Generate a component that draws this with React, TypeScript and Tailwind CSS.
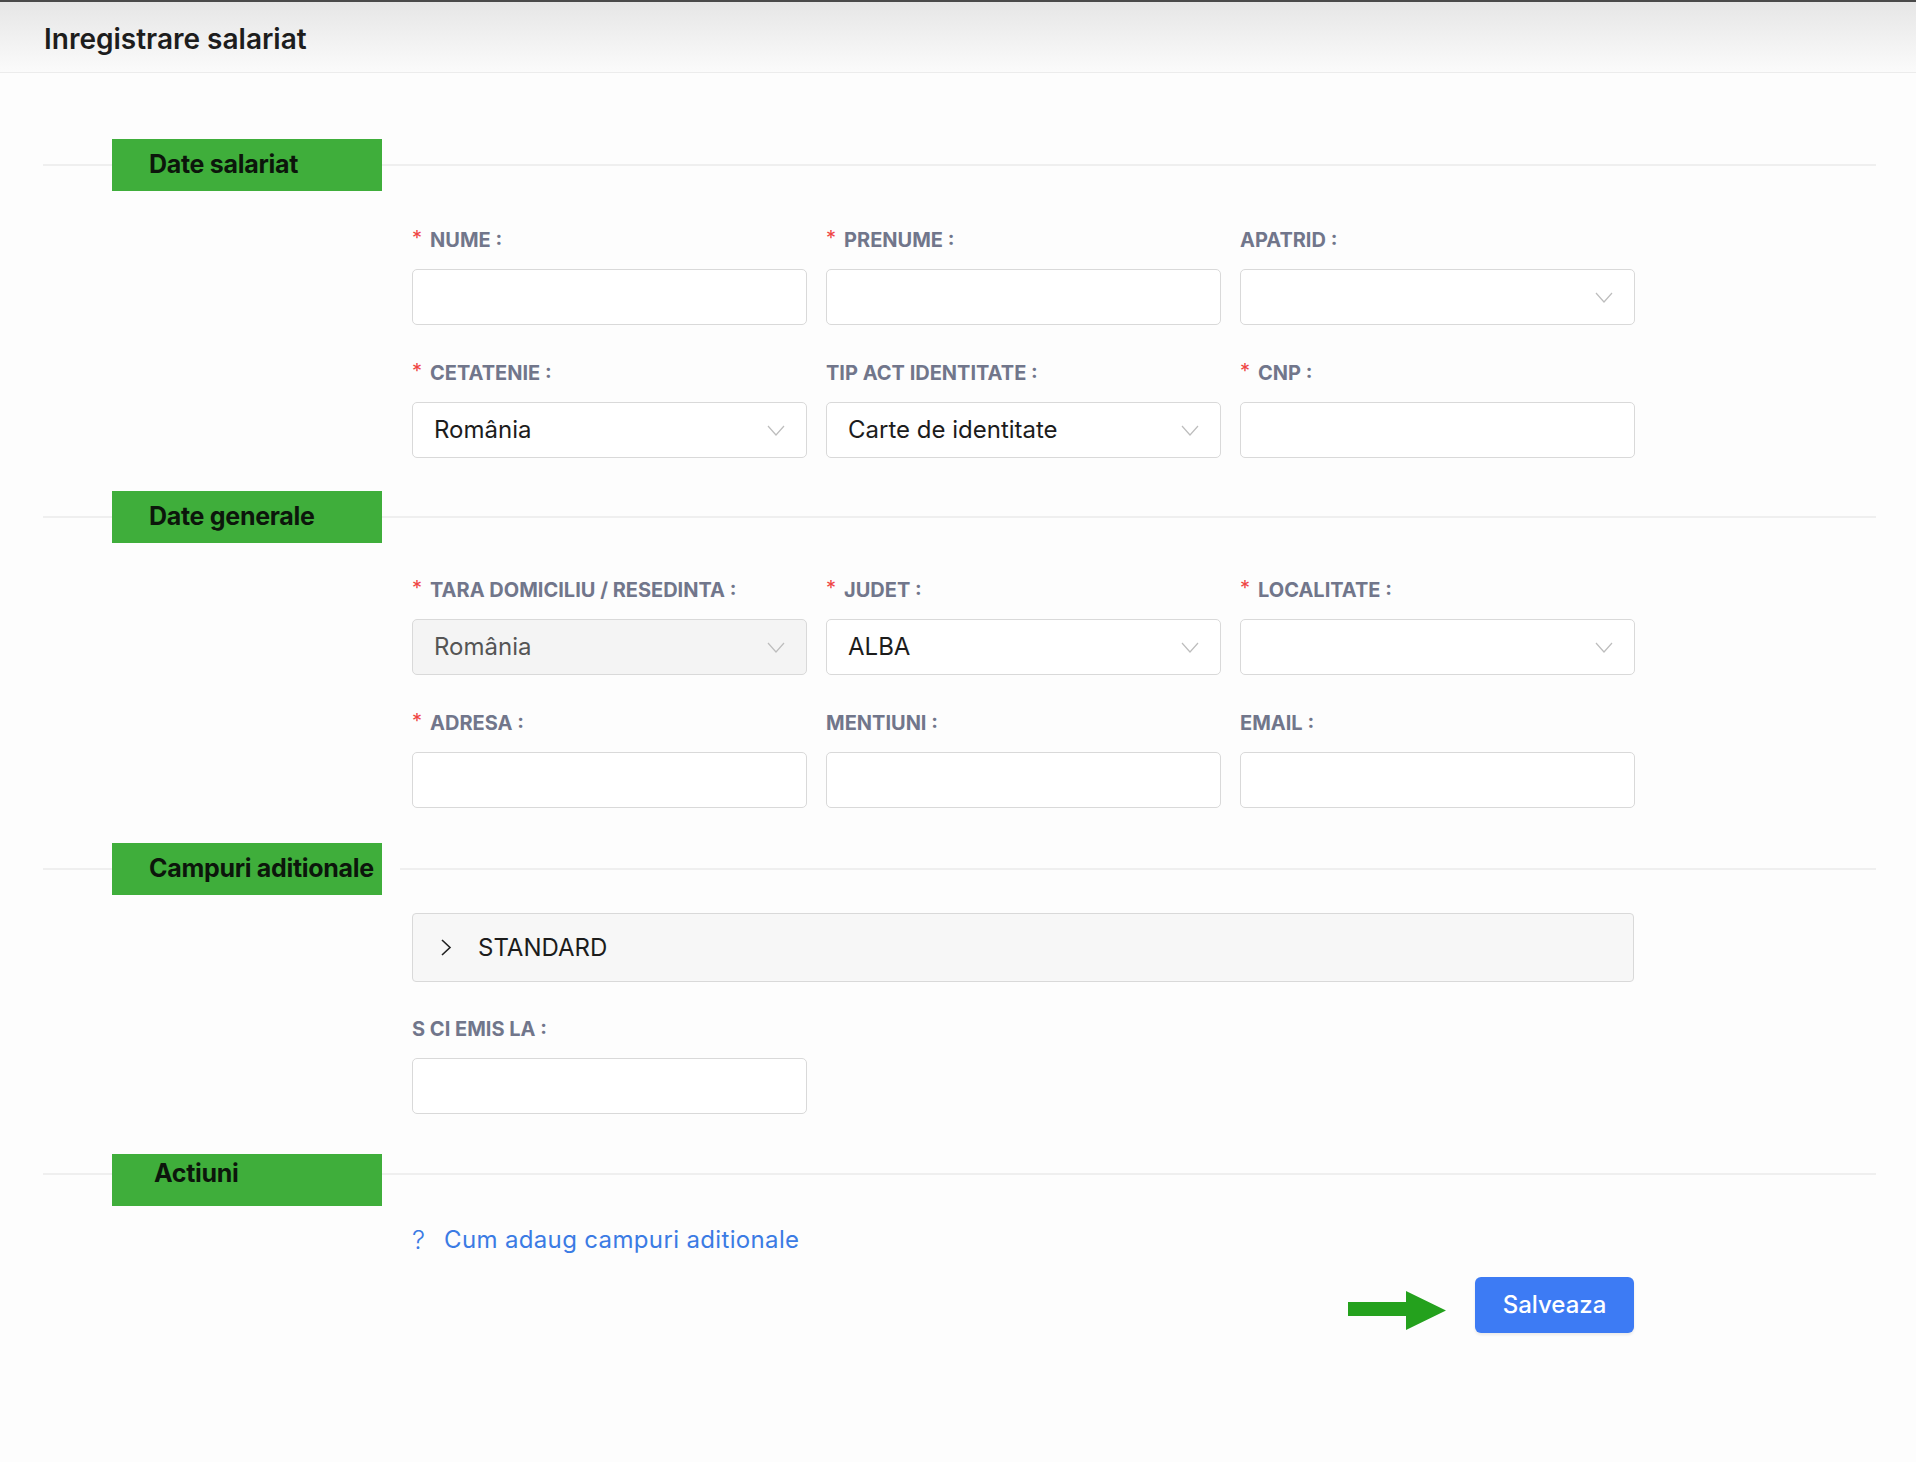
import React from "react";

interface Field {
  label: string;
  required?: boolean;
  kind?: "input" | "select";
  value?: string;
  disabled?: boolean;
}

const sectionOne: Field[] = [
  { label: "NUME", required: true },
  { label: "PRENUME", required: true },
  { label: "APATRID", kind: "select" },
  { label: "CETATENIE", required: true, kind: "select", value: "România" },
  { label: "TIP ACT IDENTITATE", kind: "select", value: "Carte de identitate" },
  { label: "CNP", required: true },
];

const sectionTwo: Field[] = [
  { label: "TARA DOMICILIU / RESEDINTA", required: true, kind: "select", value: "România", disabled: true },
  { label: "JUDET", required: true, kind: "select", value: "ALBA" },
  { label: "LOCALITATE", required: true, kind: "select" },
  { label: "ADRESA", required: true },
  { label: "MENTIUNI" },
  { label: "EMAIL" },
];

function Chevron() {
  return (
    <svg width="18" height="11" viewBox="0 0 18 11" fill="none" className="shrink-0">
      <polyline points="1,1 9,10 17,1" stroke="#bdbdbd" strokeWidth="1.2" />
    </svg>
  );
}

function FormItem({ field }: { field: Field }) {
  const { label, required, kind = "input", value, disabled } = field;
  return (
    <div className="flex flex-col">
      <div className="flex h-6 items-center text-[20px] font-bold text-[#71768b]">
        {required && <span className="mr-[8px] text-[#ef4444] font-normal text-[20px] leading-none -mt-[5px]">*</span>}
        <span>{label} :</span>
      </div>
      <div
        className={`mt-[17px] flex h-[56px] items-center justify-between rounded-[5px] border border-[#d9d9d9] pl-[21px] pr-[21px] text-[24px] ${
          disabled ? "bg-[#f4f4f4] text-[#555]" : "bg-white text-[#1c1c1c]"
        }`}
      >
        <span>{value ?? ""}</span>
        {kind === "select" && <Chevron />}
      </div>
    </div>
  );
}

function SectionDivider({ title, gap, shifted }: { title: string; gap?: boolean; shifted?: boolean }) {
  return (
    <div className="flex h-[52px] items-center">
      <div className="h-[2px] w-[69px] bg-[#efefef]" />
      <div
        className={`flex h-[52px] w-[270px] shrink-0 items-center bg-[#3fae3b] ${
          shifted ? "translate-y-[6px] pl-[42px]" : "pl-[37px]"
        }`}
      >
        <span
          className={`whitespace-nowrap text-[25px] font-bold text-[#0c160b] tracking-[-0.3px] ${
            shifted ? "-translate-y-[6px]" : ""
          }`}
        >
          {title}
        </span>
      </div>
      <div className={`h-[2px] flex-1 bg-[#efefef] ${gap ? "ml-[18px]" : ""}`} />
    </div>
  );
}

function FieldGrid({ fields }: { fields: Field[] }) {
  return (
    <div className="ml-[369px] grid grid-cols-[395px_395px_395px] gap-x-[19px] gap-y-[36px]">
      {fields.map((f) => (
        <FormItem key={f.label} field={f} />
      ))}
    </div>
  );
}

export default function App() {
  return (
    <div className="min-h-[1462px] bg-[#fdfdfd]" style={{ fontFamily: "Inter, 'Noto Sans', sans-serif" }}>
      {/* Header */}
      <div className="flex h-[73px] items-center border-t-2 border-[#4a4a4a] border-b border-b-[#ececec] bg-gradient-to-b from-[#e6e6e6] to-[#fbfbfb] pl-[44px]">
        <h1 className="mt-[3px] text-[28px] font-semibold text-[#1d1d1d]">Inregistrare salariat</h1>
      </div>

      <div className="pl-[43px] pr-[40px]">
        {/* Date salariat */}
        <div className="mt-[66px]">
          <SectionDivider title="Date salariat" />
        </div>
        <div className="mt-[37px]">
          <FieldGrid fields={sectionOne} />
        </div>

        {/* Date generale */}
        <div className="mt-[33px]">
          <SectionDivider title="Date generale" />
        </div>
        <div className="mt-[35px]">
          <FieldGrid fields={sectionTwo} />
        </div>

        {/* Campuri aditionale */}
        <div className="mt-[35px]">
          <SectionDivider title="Campuri aditionale" gap />
        </div>
        <div className="ml-[369px] w-[1222px]">
          <div className="mt-[18px] flex h-[69px] items-center rounded-[4px] border border-[#d9d9d9] bg-[#f7f7f7] pl-[27px]">
            <svg width="12" height="19" viewBox="0 0 12 19" fill="none">
              <polyline points="2,2 10,9.5 2,17" stroke="#222" strokeWidth="1.6" />
            </svg>
            <span className="ml-[26px] text-[24px] text-[#1c1c1c]">STANDARD</span>
          </div>
          <div className="mt-[35px] w-[395px]">
            <FormItem field={{ label: "S CI EMIS LA" }} />
          </div>
        </div>

        {/* Actiuni */}
        <div className="mt-[34px]">
          <SectionDivider title="Actiuni" shifted />
        </div>
        <div className="ml-[369px] w-[1222px]">
          <div className="mt-[25px] flex h-[30px] items-center text-[#3b7be4]">
            <span className="text-[26px] font-light leading-none">?</span>
            <span className="ml-[19px] text-[24px] tracking-[0.35px]">Cum adaug campuri aditionale</span>
          </div>
          <div className="mt-[22px] flex items-center justify-end">
            <svg width="98" height="40" viewBox="0 0 98 40" className="mt-[12px]">
              <polygon points="0,11 58,11 58,0 98,19.5 58,39 58,25 0,25" fill="#24a11d" />
            </svg>
            <button className="ml-[29px] h-[56px] w-[159px] rounded-[6px] bg-[#3d7bf4] text-[24px] font-medium text-white shadow-[0_2px_3px_rgba(0,0,0,0.08)]">
              Salveaza
            </button>
          </div>
        </div>
      </div>
    </div>
  );
}
